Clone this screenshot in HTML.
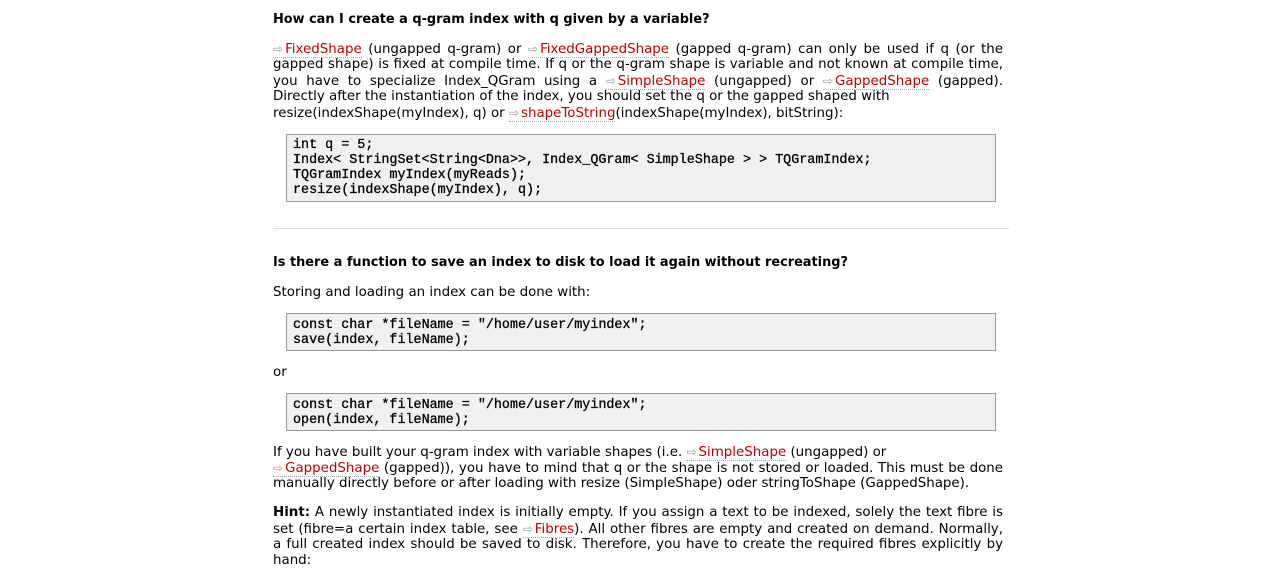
<!DOCTYPE html>
<html><head><meta charset="utf-8"><style>
body{margin:0;background:#fff;width:1264px;height:569px;overflow:hidden;position:relative;font-family:"DejaVu Sans","Liberation Sans",sans-serif;font-size:13.4px;color:#000}
.l{position:absolute;left:273px;width:730px;height:16px;line-height:16px;white-space:nowrap}
.j{text-align:justify;text-align-last:justify;white-space:normal}
.h{font-weight:bold;font-size:12.9px}
a{color:#b00;text-decoration:none;border-bottom:1px dotted #aaa}
a:before{content:"\21E8";color:#999;font-size:12px;margin-right:2px}
.box{position:absolute;left:286px;width:708px;background:#f0f0f0;border:1px solid #999}
.c{position:absolute;left:293px;font-family:"Liberation Mono",monospace;font-size:13.4px;line-height:15px;white-space:pre;color:#000;-webkit-text-stroke:0.3px #000}
.hr{position:absolute;left:273px;width:736px;top:228px;height:1px;background:#ddd}
</style></head><body>
<div class="l h" style="top:12px">How can I create a q-gram index with q given by a variable?</div>
<div class="l j" style="top:41px"><a>FixedShape</a> (ungapped q-gram) or <a>FixedGappedShape</a> (gapped q-gram) can only be used if q (or the</div>
<div class="l j" style="top:57px">gapped shape) is fixed at compile time. If q or the q-gram shape is variable and not known at compile time,</div>
<div class="l j" style="top:73px">you have to specialize Index_QGram using a <a>SimpleShape</a> (ungapped) or <a>GappedShape</a> (gapped).</div>
<div class="l" style="top:89px">Directly after the instantiation of the index, you should set the q or the gapped shaped with</div>
<div class="l" style="top:105px">resize(indexShape(myIndex), q) or <a>shapeToString</a>(indexShape(myIndex), bitString):</div>
<div class="box" style="top:134px;height:66px"></div>
<div class="c" style="top:138px">int q = 5;
Index&lt; StringSet&lt;String&lt;Dna&gt;&gt;, Index_QGram&lt; SimpleShape &gt; &gt; TQGramIndex;
TQGramIndex myIndex(myReads);
resize(indexShape(myIndex), q);</div>
<div class="hr"></div>
<div class="l h" style="top:255px">Is there a function to save an index to disk to load it again without recreating?</div>
<div class="l" style="top:285px">Storing and loading an index can be done with:</div>
<div class="box" style="top:313px;height:36px"></div>
<div class="c" style="top:318px">const char *fileName = "/home/user/myindex";
save(index, fileName);</div>
<div class="l" style="top:365px">or</div>
<div class="box" style="top:393px;height:36px"></div>
<div class="c" style="top:398px">const char *fileName = "/home/user/myindex";
open(index, fileName);</div>
<div class="l" style="top:444px">If you have built your q-gram index with variable shapes (i.e. <a>SimpleShape</a> (ungapped) or</div>
<div class="l j" style="top:460px"><a>GappedShape</a> (gapped)), you have to mind that q or the shape is not stored or loaded. This must be done</div>
<div class="l" style="top:476px">manually directly before or after loading with resize (SimpleShape) oder stringToShape (GappedShape).</div>
<div class="l j" style="top:505px"><b>Hint:</b> A newly instantiated index is initially empty. If you assign a text to be indexed, solely the text fibre is</div>
<div class="l j" style="top:521px">set (fibre=a certain index table, see <a>Fibres</a>). All other fibres are empty and created on demand. Normally,</div>
<div class="l j" style="top:537px">a full created index should be saved to disk. Therefore, you have to create the required fibres explicitly by</div>
<div class="l" style="top:553px">hand:</div>
</body></html>
